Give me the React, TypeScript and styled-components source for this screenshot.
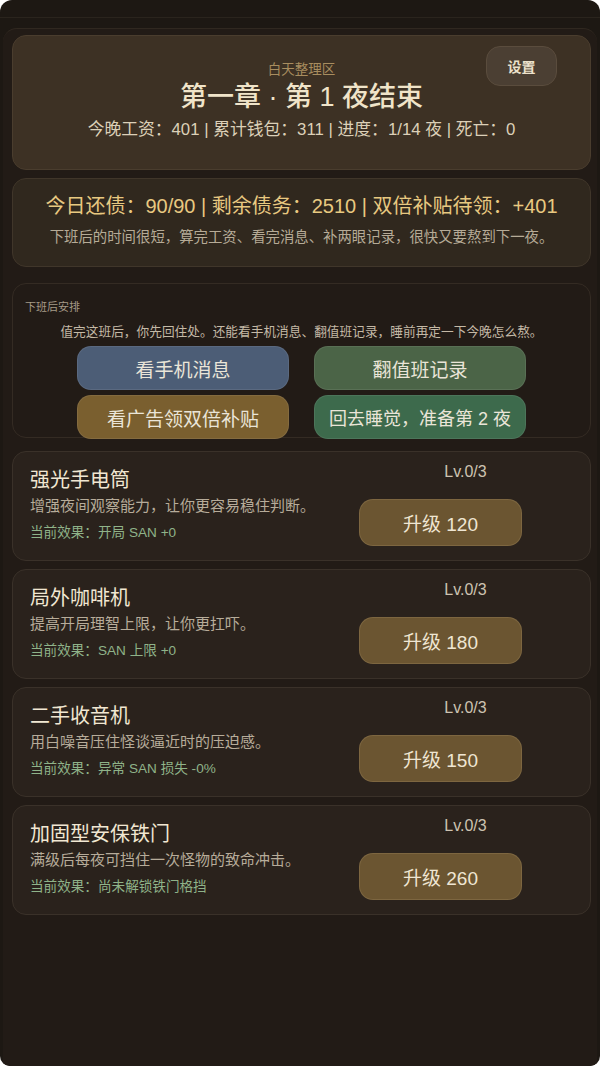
import styled, { createGlobalStyle } from 'styled-components';

const GlobalStyle = createGlobalStyle`
  html, body {
    margin: 0;
    padding: 0;
    background: #ffffff;
  }
  body {
    font-family: "Liberation Sans", "Noto Sans CJK SC", sans-serif;
  }
  * {
    box-sizing: border-box;
  }
`;

const Shell = styled.div`
  width: 600px;
  height: 1066px;
  background-color: #1d1813;
  border-radius: 12px 12px 10px 10px;
  overflow: hidden;
  display: flex;
  flex-direction: column;
`;

const TopBar = styled.div`
  height: 18px;
  border-bottom: 1px solid #2a241d;
`;

const TopGap = styled.div`
  height: 10px;
`;

const Content = styled.div`
  flex: 1;
  margin: 0 3px;
  padding: 6px 6px 0 9px;
  background-color: #221b16;
  border-top: 1px solid #302820;
  border-radius: 14px 14px 0 0;
  display: flex;
  flex-direction: column;
`;

const HeaderCard = styled.div`
  position: relative;
  height: 135px;
  background-color: #3d3124;
  border: 1px solid #4a3d2e;
  border-radius: 14px;
  display: flex;
  flex-direction: column;
  align-items: center;
  padding-top: 26px;
`;

const Zone = styled.div`
  font-size: 13.5px;
  color: #a88d5f;
  line-height: 16px;
`;

const ChapterTitle = styled.h1`
  margin: 2px 0 0;
  font-size: 27px;
  font-weight: 500;
  color: #f0e4c9;
  line-height: 34px;
`;

const Stats = styled.div`
  margin-top: 5px;
  font-size: 16.8px;
  color: #dcd0b8;
  line-height: 21px;
`;

const SettingsButton = styled.button`
  position: absolute;
  top: 10px;
  right: 33px;
  width: 71px;
  height: 40px;
  border-radius: 14px;
  border: 1px solid #5a4c3d;
  background-color: #4b3f33;
  color: #ece1cb;
  font-family: inherit;
  font-size: 14px;
  font-weight: bold;
`;

const DebtCard = styled.div`
  margin-top: 8px;
  height: 89px;
  background-color: #30281e;
  border: 1px solid #40362a;
  border-radius: 14px;
  display: flex;
  flex-direction: column;
  align-items: center;
  padding-top: 14px;
`;

const DebtLine = styled.div`
  font-size: 20px;
  color: #e8c981;
  line-height: 27px;
`;

const DebtNote = styled.div`
  margin-top: 8px;
  font-size: 14.4px;
  color: #b6ab97;
  line-height: 18px;
`;

const PlanCard = styled.div`
  margin-top: 16px;
  height: 155px;
  border: 1px solid #342b23;
  border-radius: 14px;
  padding: 16px 12px 0;
  display: flex;
  flex-direction: column;
`;

const PlanLabel = styled.div`
  font-size: 11px;
  color: #a59a87;
  line-height: 14px;
`;

const PlanText = styled.div`
  margin-top: 10px;
  text-align: center;
  font-size: 12.7px;
  color: #c4b9a6;
  line-height: 16px;
`;

const ActionGrid = styled.div`
  margin-top: 6px;
  display: grid;
  grid-template-columns: 212px 212px;
  column-gap: 25px;
  row-gap: 5px;
  justify-content: center;
`;

const ActionButton = styled.button<{ $bg: string; $size?: number }>`
  height: 44px;
  border-radius: 14px;
  border: 1px solid rgba(255, 255, 255, 0.08);
  background-color: ${(p) => p.$bg};
  color: #eae5d8;
  font-family: inherit;
  font-size: ${(p) => p.$size ?? 19}px;
`;

const UpgradeList = styled.div`
  margin-top: 13px;
  display: flex;
  flex-direction: column;
  gap: 8px;
`;

const UpgradeCard = styled.div`
  height: 110px;
  background-color: #2a221c;
  border: 1px solid #3a3129;
  border-radius: 14px;
  display: flex;
  justify-content: space-between;
  padding: 10px 68px 0 17px;
`;

const UpgradeInfo = styled.div`
  display: flex;
  flex-direction: column;
  padding-top: 6px;
`;

const UpgradeName = styled.div`
  font-size: 20px;
  color: #f1e7d2;
  line-height: 25px;
`;

const UpgradeDesc = styled.div`
  margin-top: 3px;
  font-size: 15px;
  color: #b7ac9a;
  line-height: 20px;
`;

const UpgradeEffect = styled.div`
  margin-top: 8px;
  font-size: 13.6px;
  color: #8fb389;
  line-height: 17px;
`;

const UpgradeSide = styled.div`
  width: 163px;
  display: flex;
  flex-direction: column;
`;

const Level = styled.div`
  padding-left: 50px;
  text-align: center;
  font-size: 16px;
  color: #cdc3b1;
  line-height: 20px;
`;

const UpgradeButton = styled.button`
  margin-top: 17px;
  height: 47px;
  border-radius: 14px;
  border: 1px solid rgba(255, 230, 170, 0.12);
  background-color: #6b5531;
  color: #efe6d3;
  font-family: inherit;
  font-size: 19px;
`;

const upgrades = [
  {
    name: '强光手电筒',
    desc: '增强夜间观察能力，让你更容易稳住判断。',
    effect: '当前效果：开局 SAN +0',
    cost: 120,
  },
  {
    name: '局外咖啡机',
    desc: '提高开局理智上限，让你更扛吓。',
    effect: '当前效果：SAN 上限 +0',
    cost: 180,
  },
  {
    name: '二手收音机',
    desc: '用白噪音压住怪谈逼近时的压迫感。',
    effect: '当前效果：异常 SAN 损失 -0%',
    cost: 150,
  },
  {
    name: '加固型安保铁门',
    desc: '满级后每夜可挡住一次怪物的致命冲击。',
    effect: '当前效果：尚未解锁铁门格挡',
    cost: 260,
  },
];

const App = () => {
  return (
    <>
      <GlobalStyle />
      <Shell>
        <TopBar />
        <TopGap />
        <Content>
          <HeaderCard>
            <Zone>白天整理区</Zone>
            <ChapterTitle>第一章 · 第 1 夜结束</ChapterTitle>
            <Stats>今晚工资：401 | 累计钱包：311 | 进度：1/14 夜 | 死亡：0</Stats>
            <SettingsButton>设置</SettingsButton>
          </HeaderCard>
          <DebtCard>
            <DebtLine>今日还债：90/90 | 剩余债务：2510 | 双倍补贴待领：+401</DebtLine>
            <DebtNote>下班后的时间很短，算完工资、看完消息、补两眼记录，很快又要熬到下一夜。</DebtNote>
          </DebtCard>
          <PlanCard>
            <PlanLabel>下班后安排</PlanLabel>
            <PlanText>值完这班后，你先回住处。还能看手机消息、翻值班记录，睡前再定一下今晚怎么熬。</PlanText>
            <ActionGrid>
              <ActionButton $bg="#4c5d76">看手机消息</ActionButton>
              <ActionButton $bg="#4b6447">翻值班记录</ActionButton>
              <ActionButton $bg="#7a5f2f">看广告领双倍补贴</ActionButton>
              <ActionButton $bg="#3d6a4c" $size={18}>
                回去睡觉，准备第 2 夜
              </ActionButton>
            </ActionGrid>
          </PlanCard>
          <UpgradeList>
            {upgrades.map((u) => (
              <UpgradeCard key={u.name}>
                <UpgradeInfo>
                  <UpgradeName>{u.name}</UpgradeName>
                  <UpgradeDesc>{u.desc}</UpgradeDesc>
                  <UpgradeEffect>{u.effect}</UpgradeEffect>
                </UpgradeInfo>
                <UpgradeSide>
                  <Level>Lv.0/3</Level>
                  <UpgradeButton>升级 {u.cost}</UpgradeButton>
                </UpgradeSide>
              </UpgradeCard>
            ))}
          </UpgradeList>
        </Content>
      </Shell>
    </>
  );
};

export default App;
